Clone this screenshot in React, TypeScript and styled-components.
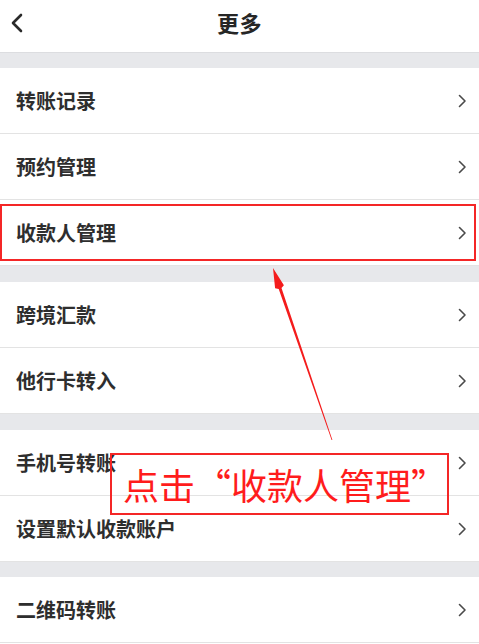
import * as React from "react";
import styled, { createGlobalStyle } from "styled-components";

const GlobalStyle = createGlobalStyle`
  html, body {
    margin: 0;
    padding: 0;
    background: #ffffff;
  }
  body {
    font-family: "Noto Sans CJK SC", "Noto Sans", sans-serif;
    color: #2b2b2b;
  }
`;

interface IMenuItem {
  label: string;
  highlight?: boolean;
}

const groups: { gap: number; items: IMenuItem[] }[] = [
  { gap: 15, items: [{ label: "转账记录" }, { label: "预约管理" }, { label: "收款人管理", highlight: true }] },
  { gap: 16, items: [{ label: "跨境汇款" }, { label: "他行卡转入" }] },
  { gap: 16, items: [{ label: "手机号转账" }, { label: "设置默认收款账户" }] },
  { gap: 15, items: [{ label: "二维码转账" }] },
];

const ChevronRight = () => (
  <svg width="9" height="14" viewBox="0 0 9 14">
    <polyline points="1.5,1.5 7,7 1.5,12.5" fill="none" stroke="#4a4a4a" strokeWidth="1.6" strokeLinecap="round" strokeLinejoin="round" />
  </svg>
);

const BackIcon = () => (
  <svg width="14" height="20" viewBox="0 0 14 20">
    <polyline points="11,2 3,10 11,18" fill="none" stroke="#2a2a2a" strokeWidth="2.6" strokeLinecap="round" strokeLinejoin="round" />
  </svg>
);

// tapered red arrow from the note up to the highlighted row
const Arrow = () => (
  <ArrowLayer width="479" height="644" viewBox="0 0 479 644">
    <polygon
      points="332.4,439.9 281.5,288.1 283.9,285.3 273,268 275.1,288.2 278.7,289.1 331.6,440.1"
      fill="#f41c1c"
    />
  </ArrowLayer>
);

const App: React.FunctionComponent = () => {
  return (
    <Page>
      <GlobalStyle />
      <Header>
        <BackButton>
          <BackIcon />
        </BackButton>
        <Title>更多</Title>
      </Header>
      {groups.map((group, gi) => (
        <React.Fragment key={gi}>
          <Gap $height={group.gap} />
          {group.items.map((item) => (
            <Row key={item.label} $highlight={item.highlight}>
              <Label>{item.label}</Label>
              <ChevronRight />
            </Row>
          ))}
        </React.Fragment>
      ))}
      <Arrow />
      <Note>点击“收款人管理”</Note>
    </Page>
  );
};

export default App;

const Page = styled.div`
  position: relative;
  width: 479px;
  height: 644px;
  overflow: hidden;
  background: #ffffff;
`;

const Header = styled.div`
  position: relative;
  height: 53px;
  padding-bottom: 9px;
  box-sizing: border-box;
  display: flex;
  align-items: center;
  justify-content: center;
  border-bottom: 1px solid #dcdde0;
`;

const BackButton = styled.div`
  position: absolute;
  left: 10px;
  top: 13px;
  display: flex;
`;

const Title = styled.div`
  font-size: 22px;
  font-weight: 700;
  color: #262626;
  letter-spacing: 0.5px;
`;

const Gap = styled.div<{ $height: number }>`
  height: ${(p) => p.$height}px;
  background: #e7e8eb;
`;

const Row = styled.div<{ $highlight?: boolean }>`
  position: relative;
  height: 66px;
  box-sizing: border-box;
  border-bottom: 1px solid #e3e3e3;
  display: flex;
  align-items: center;
  justify-content: space-between;
  padding: 0 12px 0 16px;

  ${(p) =>
    p.$highlight &&
    `
    &::after {
      content: "";
      position: absolute;
      left: 0;
      right: 3px;
      top: 4px;
      bottom: 4px;
      border: 2px solid #f42626;
    }
  `}
`;

const Label = styled.span`
  font-size: 20px;
  font-weight: 700;
  color: #2e2e2e;
`;

const ArrowLayer = styled.svg`
  position: absolute;
  left: 0;
  top: 0;
  pointer-events: none;
`;

const Note = styled.div`
  position: absolute;
  left: 110px;
  top: 453px;
  width: 339px;
  height: 62px;
  box-sizing: border-box;
  border: 2px solid #f42626;
  display: flex;
  align-items: center;
  padding-left: 11px;
  font-size: 36px;
  font-weight: 400;
  color: #ff1c1c;
  white-space: nowrap;
`;
